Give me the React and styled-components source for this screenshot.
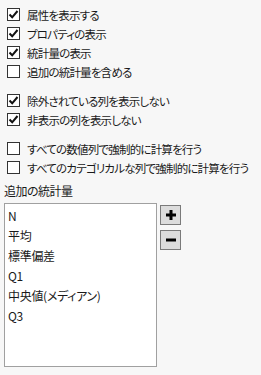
import React from "react";
import styled, { createGlobalStyle } from "styled-components";

const Global = createGlobalStyle`
  html, body {
    margin: 0;
    padding: 0;
    background: #f7f7f7;
  }
  body {
    font-family: "Noto Sans CJK JP", "Noto Sans", sans-serif;
    font-size: 12px;
    font-feature-settings: "palt";
    color: #1a1a1a;
  }
`;

const Page = styled.div`
  width: 261px;
  height: 375px;
  box-sizing: border-box;
  padding: 5px 0 0 7px;
  display: flex;
  flex-direction: column;
  overflow: hidden;
`;

const Group = styled.div`
  display: flex;
  flex-direction: column;
  margin-bottom: ${(p) => p.gap || 0}px;
`;

const Row = styled.label`
  height: 19px;
  display: flex;
  align-items: center;
  gap: 7px;
  white-space: nowrap;
  font-size: 11.5px;
  letter-spacing: -0.8px;
`;

const Box = styled.span`
  width: 13px;
  height: 13px;
  box-sizing: border-box;
  border: 1px solid #333;
  background: #fff;
  display: flex;
  align-items: center;
  justify-content: center;
  flex-shrink: 0;
`;

const Label = styled.div`
  margin: 7px 0 5px -3px;
  height: 14px;
  line-height: 14px;
  letter-spacing: -0.5px;
`;

const ListArea = styled.div`
  display: flex;
  gap: 3px;
  margin-left: -3px;
`;

const List = styled.div`
  width: 153px;
  height: 164px;
  box-sizing: border-box;
  border: 1px solid #a0a0a0;
  background: #fff;
  padding: 2px 0 0 3px;
`;

const Item = styled.div`
  height: 20px;
  line-height: 20px;
  letter-spacing: -0.3px;
`;

const Buttons = styled.div`
  display: flex;
  flex-direction: column;
  gap: 5px;
  margin-top: 2px;
`;

const Btn = styled.button`
  width: 21px;
  height: 20px;
  padding: 0;
  box-sizing: border-box;
  border: 1px solid #7a7a7a;
  background: #dcdcdc;
  display: flex;
  align-items: center;
  justify-content: center;
`;

const Check = ({ on, children }) => (
  <Row>
    <Box>
      {on && (
        <svg width="11" height="11" viewBox="0 0 11 11">
          <path d="M1.5 5.5 L4.2 8.3 L9.5 2" fill="none" stroke="#111" strokeWidth="2" />
        </svg>
      )}
    </Box>
    {children}
  </Row>
);

const stats = ["N", "平均", "標準偏差", "Q1", "中央値(メディアン)", "Q3"];

export default function App() {
  return (
    <Page>
      <Global />
      <Group gap={10}>
        <Check on>属性を表示する</Check>
        <Check on>プロパティの表示</Check>
        <Check on>統計量の表示</Check>
        <Check>追加の統計量を含める</Check>
      </Group>
      <Group gap={10}>
        <Check on>除外されている列を表示しない</Check>
        <Check on>非表示の列を表示しない</Check>
      </Group>
      <Group>
        <Check>すべての数値列で強制的に計算を行う</Check>
        <Check>すべてのカテゴリカルな列で強制的に計算を行う</Check>
      </Group>
      <Label>追加の統計量</Label>
      <ListArea>
        <List>
          {stats.map((s) => (
            <Item key={s}>{s}</Item>
          ))}
        </List>
        <Buttons>
          <Btn>
            <svg width="12" height="12" viewBox="0 0 12 12">
              <path d="M6 1 V11 M1 6 H11" stroke="#000" strokeWidth="3" />
            </svg>
          </Btn>
          <Btn>
            <svg width="12" height="12" viewBox="0 0 12 12">
              <path d="M1 6 H11" stroke="#000" strokeWidth="3" />
            </svg>
          </Btn>
        </Buttons>
      </ListArea>
    </Page>
  );
}
